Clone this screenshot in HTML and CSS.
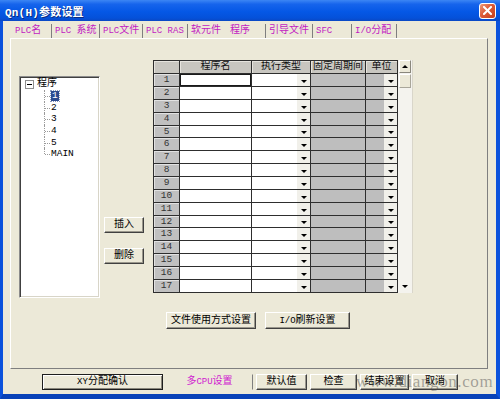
FILE: index.html
```html
<!DOCTYPE html>
<html>
<head>
<meta charset="utf-8">
<title>Qn(H)参数设置</title>
<link rel="stylesheet" href="styles.css">
</head>
<body>
<div class="window">
  <div class="titlebar">
    <span class="title">Qn(H)参数设置</span>
    <span class="close"><svg width="9" height="9" viewBox="0 0 9 9"><path d="M1 1 L8 8 M8 1 L1 8" stroke="#fff" stroke-width="2" stroke-linecap="square"/></svg></span>
  </div>
  <div class="client">
    <div class="tabs">
      <span class="tab"><span class="lat">PLC</span>名</span>
      <span class="tab"><span class="lat">PLC </span>系统</span>
      <span class="tab"><span class="lat">PLC</span>文件</span>
      <span class="tab"><span class="lat">PLC RAS</span></span>
      <span class="tab plain">软元件</span>
      <span class="tab sel">程序</span>
      <span class="tab">引导文件</span>
      <span class="tab"><span class="lat">SFC</span></span>
      <span class="tab"><span class="lat">I/O</span>分配</span>
    </div>
    <div class="panel">
      <div class="toprow">
        <div class="tree">
          <div class="root"><span class="minus"></span><span>程序</span></div>
          <div class="kids">
            <div class="kid"><span class="hl">1</span></div>
            <div class="kid">2</div>
            <div class="kid">3</div>
            <div class="kid">4</div>
            <div class="kid">5</div>
            <div class="kid">MAIN</div>
          </div>
        </div>
        <div class="sidebtns">
          <button class="btn">插入</button>
          <button class="btn">删除</button>
        </div>
        <div class="gridwrap">
          <div class="grid">
            <div class="hd"></div><div class="hd">程序名</div><div class="hd">执行类型</div><div class="hd">固定周期间</div><div class="hd">单位</div>
            <div class="rh">1</div><div class="c name focus"></div><div class="c type"><i class="dd"></i></div><div class="c fixed"></div><div class="c unit"><i class="dd"></i></div>
            <div class="rh">2</div><div class="c name"></div><div class="c type"><i class="dd"></i></div><div class="c fixed"></div><div class="c unit"><i class="dd"></i></div>
            <div class="rh">3</div><div class="c name"></div><div class="c type"><i class="dd"></i></div><div class="c fixed"></div><div class="c unit"><i class="dd"></i></div>
            <div class="rh">4</div><div class="c name"></div><div class="c type"><i class="dd"></i></div><div class="c fixed"></div><div class="c unit"><i class="dd"></i></div>
            <div class="rh">5</div><div class="c name"></div><div class="c type"><i class="dd"></i></div><div class="c fixed"></div><div class="c unit"><i class="dd"></i></div>
            <div class="rh">6</div><div class="c name"></div><div class="c type"><i class="dd"></i></div><div class="c fixed"></div><div class="c unit"><i class="dd"></i></div>
            <div class="rh">7</div><div class="c name"></div><div class="c type"><i class="dd"></i></div><div class="c fixed"></div><div class="c unit"><i class="dd"></i></div>
            <div class="rh">8</div><div class="c name"></div><div class="c type"><i class="dd"></i></div><div class="c fixed"></div><div class="c unit"><i class="dd"></i></div>
            <div class="rh">9</div><div class="c name"></div><div class="c type"><i class="dd"></i></div><div class="c fixed"></div><div class="c unit"><i class="dd"></i></div>
            <div class="rh">10</div><div class="c name"></div><div class="c type"><i class="dd"></i></div><div class="c fixed"></div><div class="c unit"><i class="dd"></i></div>
            <div class="rh">11</div><div class="c name"></div><div class="c type"><i class="dd"></i></div><div class="c fixed"></div><div class="c unit"><i class="dd"></i></div>
            <div class="rh">12</div><div class="c name"></div><div class="c type"><i class="dd"></i></div><div class="c fixed"></div><div class="c unit"><i class="dd"></i></div>
            <div class="rh">13</div><div class="c name"></div><div class="c type"><i class="dd"></i></div><div class="c fixed"></div><div class="c unit"><i class="dd"></i></div>
            <div class="rh">14</div><div class="c name"></div><div class="c type"><i class="dd"></i></div><div class="c fixed"></div><div class="c unit"><i class="dd"></i></div>
            <div class="rh">15</div><div class="c name"></div><div class="c type"><i class="dd"></i></div><div class="c fixed"></div><div class="c unit"><i class="dd"></i></div>
            <div class="rh">16</div><div class="c name"></div><div class="c type"><i class="dd"></i></div><div class="c fixed"></div><div class="c unit"><i class="dd"></i></div>
            <div class="rh">17</div><div class="c name"></div><div class="c type"><i class="dd"></i></div><div class="c fixed"></div><div class="c unit"><i class="dd"></i></div>
          </div>
          <div class="vscroll">
            <span class="sb-up"></span>
            <span class="sb-thumb"></span>
            <span class="sb-track"></span>
            <span class="sb-down"></span>
          </div>
        </div>
      </div>
      <div class="midbtns">
        <button class="btn wide1">文件使用方式设置</button>
        <button class="btn wide2"><span class="lat">I/O</span>刷新设置</button>
      </div>
    </div>
    <div class="bottombtns">
      <button class="btn b-xy"><span class="lat">XY</span>分配确认</button>
      <button class="btn b-cpu">多<span class="lat">CPU</span>设置</button>
      <button class="btn b-def">默认值</button>
      <button class="btn b-chk">检查</button>
      <button class="btn b-end">结束设置</button>
      <button class="btn b-cancel">取消</button>
    </div>
  </div>
  <div class="watermark">www.diangon.com</div>
</div>
</body>
</html>
```
FILE: styles.css
```css
* { box-sizing: border-box; }
html, body { margin: 0; padding: 0; }
body {
  width: 500px;
  height: 399px;
  overflow: hidden;
  background: #ECE9D8;
  font-family: "Liberation Mono", "Noto Sans CJK SC", monospace;
  font-size: 10px;
  color: #000;
}
.lat { font-size: 9px; }
.window {
  position: relative;
  width: 500px;
  height: 399px;
  display: flex;
  flex-direction: column;
}
.titlebar {
  height: 21px;
  flex: none;
  display: flex;
  align-items: center;
  justify-content: space-between;
  padding: 0 4px 0 5px;
  background: linear-gradient(#3C86F4 0%, #1664EC 20%, #0558E6 55%, #0451DA 85%, #0A48C4 100%);
}
.title {
  color: #fff;
  font-weight: bold;
  font-size: 11px;
  text-shadow: 1px 1px 0 #0B2C80;
  letter-spacing: 0.2px;
}
.close {
  width: 17px;
  height: 16px;
  border: 1px solid #fff;
  border-radius: 3px;
  background: linear-gradient(135deg, #EE9A78 0%, #DC5A38 45%, #C6401C 100%);
  display: flex;
  align-items: center;
  justify-content: center;
}
.client {
  flex: 1;
  display: flex;
  flex-direction: column;
  background: #ECE9D8;
  border-left: 3px solid #0B52DC;
  border-right: 4px solid #0B52DC;
  border-bottom: 5px solid #0842B8;
}
.tabs {
  height: 17px;
  flex: none;
  margin-left: 9px;
  display: grid;
  grid-template-columns: 40px 48px 43px 45px 38px 40px 47px 39px 45px;
  align-items: end;
}
.tab {
  height: 14px;
  padding-left: 3px;
  border-right: 1px solid #7F7F7F;
  color: #C21BC2;
  line-height: 13px;
  white-space: nowrap;
  overflow: hidden;
}
.tab.plain { border-right-color: transparent; }
.tab.sel { padding-left: 4px; }
.panel {
  width: 478px;
  height: 331px;
  flex: none;
  margin-left: 7px;
  border: 1px solid;
  border-color: #fff #7F7F7F #7F7F7F #fff;
  padding: 21px 0 0 8px;
}
.toprow {
  display: flex;
  align-items: flex-start;
  height: 238px;
}
.tree {
  width: 81px;
  height: 222px;
  margin-top: 16px;
  background: #fff;
  border: 1px solid;
  border-color: #8C8C8C #fff #fff #8C8C8C;
  box-shadow: inset 1px 1px 0 #404040, inset -1px -1px 0 #D8D5C8;
  padding: 1px 0 0 5px;
  line-height: 12px;
}
.root {
  display: flex;
  align-items: center;
  gap: 3px;
  height: 12px;
}
.minus {
  width: 9px;
  height: 9px;
  border: 1px solid #8E8E8E;
  background: #fff;
  display: flex;
  align-items: center;
  justify-content: center;
}
.minus::after {
  content: "";
  width: 5px;
  height: 1px;
  background: #000;
}
.kids {
  margin-left: 19px;
}
.kid {
  position: relative;
  height: 11.7px;
  line-height: 11.7px;
  padding-left: 7px;
  font-size: 9.5px;
}
.kid::before {
  content: "";
  position: absolute;
  left: 0;
  top: 0;
  bottom: 0;
  border-left: 1px dotted #9A9A9A;
}
.kid:last-child::before { bottom: 50%; }
.kid::after {
  content: "";
  position: absolute;
  left: 1px;
  top: 50%;
  width: 5px;
  border-top: 1px dotted #9A9A9A;
}
.hl {
  display: inline-block;
  background: #2C4A8E;
  color: #fff;
  padding: 0 1px;
  line-height: 10px;
  outline: 1px dotted #8899BB;
}
.sidebtns {
  margin: 157px 0 0 4px;
  display: flex;
  flex-direction: column;
  gap: 15px;
}
.btn {
  appearance: none;
  -webkit-appearance: none;
  margin: 0;
  height: 16px;
  padding: 0;
  background: #ECE9D8;
  border: 1px solid;
  border-color: #fff #404040 #404040 #fff;
  box-shadow: inset -1px -1px 0 #9A978C;
  font-family: "Liberation Mono", "Noto Sans CJK SC", monospace;
  font-size: 10px;
  line-height: 12px;
  color: #000;
  display: flex;
  align-items: center;
  justify-content: center;
  white-space: nowrap;
}
.sidebtns .btn { width: 40px; }
.gridwrap {
  margin-left: 9px;
  display: flex;
}
.grid {
  width: 245px;
  display: grid;
  grid-template-columns: 25px 71px 58px 54px 31px;
  grid-template-rows: 12px repeat(4, 12px) 11px repeat(6, 12px) 11px repeat(5, 12px);
  gap: 1px;
  padding: 1px;
  background: #2E2E2E;
}
.hd {
  background: #C8C6C0;
  box-shadow: inset 1px 1px 0 #E6E4DE;
  text-align: center;
  line-height: 12px;
  white-space: nowrap;
  overflow: hidden;
  color: #111;
}
.rh {
  background: #C0C0C0;
  box-shadow: inset 1px 1px 0 #E2E2E2;
  text-align: center;
  line-height: 12px;
  color: #333;
  font-size: 9.5px;
}
.c { display: flex; justify-content: flex-end; }
.name { background: #fff; }
.focus { box-shadow: inset 0 0 0 1px #1A1A1A; }
.type { background: #fff; }
.fixed { background: #BEBEBE; }
.unit { background: #BEBEBE; }
.dd {
  width: 13px;
  background: #F1F0EA;
  display: flex;
  align-items: center;
  justify-content: center;
}
.dd::after {
  content: "";
  margin-top: 2px;
  border-style: solid;
  border-width: 3px 3px 0 3px;
  border-color: #000 transparent transparent transparent;
}
.vscroll {
  width: 15px;
  height: 233px;
  display: flex;
  flex-direction: column;
  padding: 0 1px 0 1px;
  background: #F4F3EE;
  border-right: 1px solid #D9D6CA;
}
.sb-up {
  height: 13px;
  background: #ECE9D8;
  border: 1px solid;
  border-color: #fff #8A877C #8A877C #fff;
  display: flex;
  align-items: center;
  justify-content: center;
}
.sb-up::after {
  content: "";
  border-style: solid;
  border-width: 0 3px 3px 3px;
  border-color: transparent transparent #000 transparent;
}
.sb-thumb {
  height: 14px;
  margin-top: 1px;
  background: #ECE9D8;
  border: 1px solid;
  border-color: #fff #A9A69A #A9A69A #fff;
}
.sb-track { flex: 1; }
.sb-down {
  height: 13px;
  display: flex;
  align-items: center;
  justify-content: center;
}
.sb-down::after {
  content: "";
  border-style: solid;
  border-width: 3px 3px 0 3px;
  border-color: #000 transparent transparent transparent;
}
.midbtns {
  display: flex;
  gap: 9px;
  margin-top: 14px;
  padding-left: 147px;
}
.midbtns .btn { height: 17px; }
.wide1 { width: 90px; }
.wide2 { width: 85px; }
.bottombtns {
  display: flex;
  gap: 3px;
  margin-top: 5px;
  padding-left: 39px;
}
.b-xy {
  width: 121px;
  border: 1px solid #1E1E1E;
  box-shadow: inset 1px 1px 0 #fff, inset -1px -1px 0 #8A877C;
}
.b-cpu {
  width: 87px;
  color: #D01CD0;
  border-color: transparent #7F7F7F transparent transparent;
  box-shadow: none;
}
.b-def { width: 51px; }
.b-chk { width: 47px; }
.b-end { width: 49px; }
.b-cancel { width: 46px; }
.watermark {
  position: absolute;
  left: 356px;
  top: 372px;
  font-family: "Liberation Serif", serif;
  font-size: 17px;
  letter-spacing: 0.6px;
  color: rgba(70, 70, 70, 0.45);
  white-space: nowrap;
}
```
